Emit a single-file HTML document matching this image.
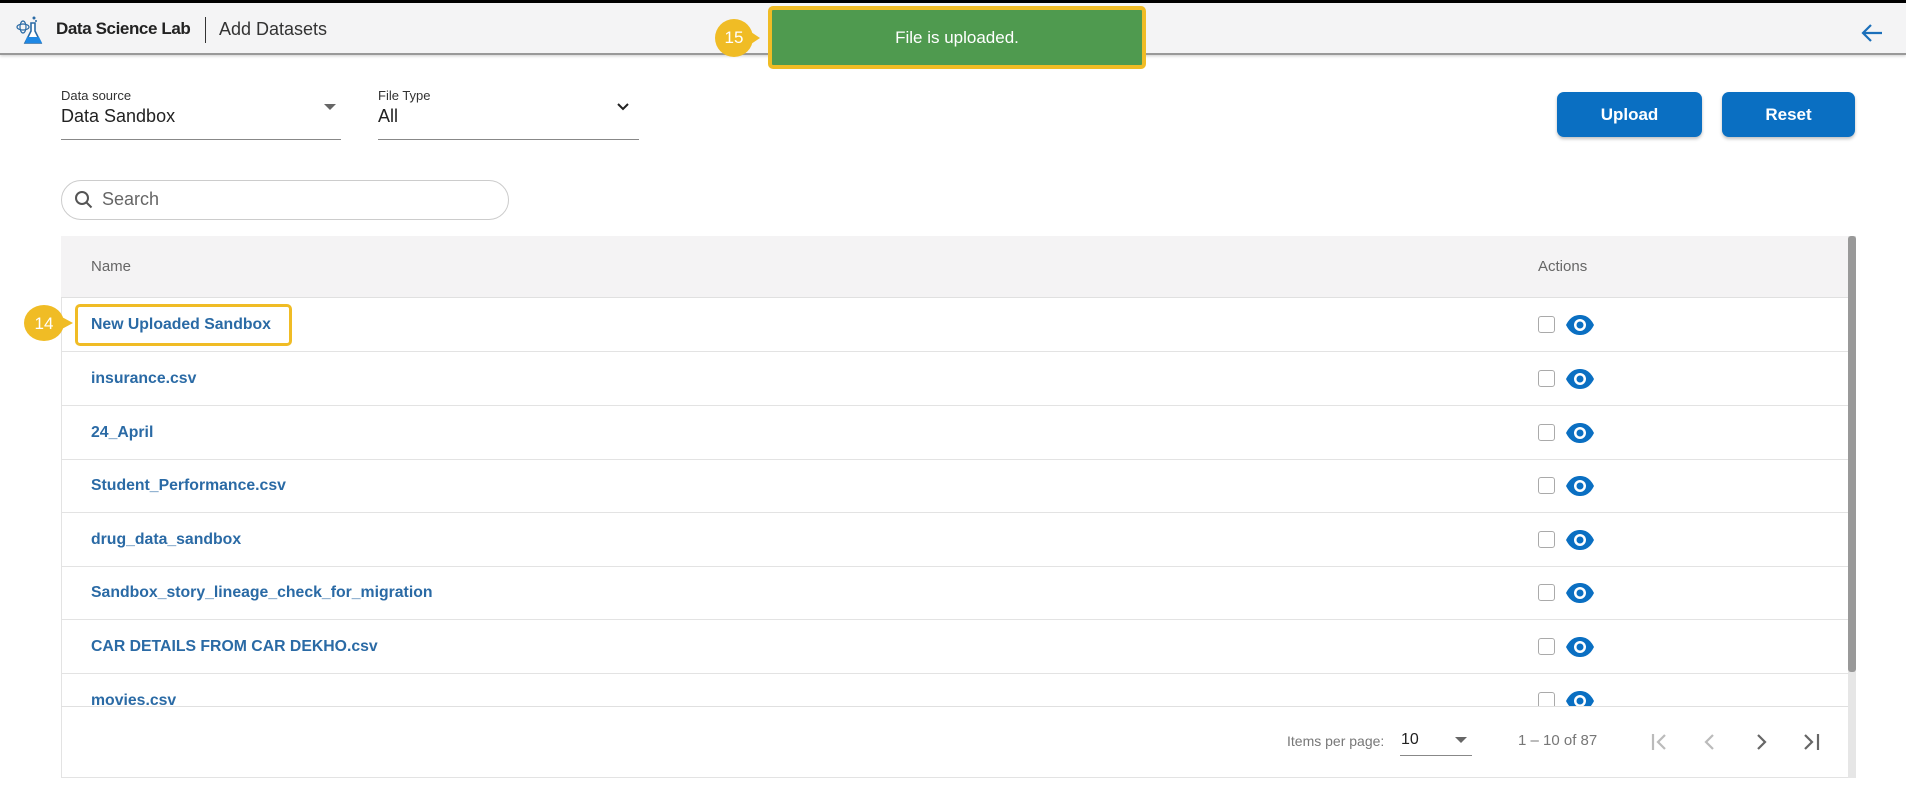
<!DOCTYPE html>
<html><head><meta charset="utf-8"><style>
*{box-sizing:border-box;margin:0;padding:0}
body{width:1906px;height:796px;background:#fff;font-family:"Liberation Sans",sans-serif;position:relative;overflow:hidden}
.abs{position:absolute}
.row{position:absolute;left:61px;width:1787px;height:54px;border-bottom:1px solid #e3e3e3}
.row .n{position:absolute;left:30px;top:18px;font-size:15.8px;font-weight:bold;color:#2a6aa5}
.row .cb{position:absolute;left:1477px;top:18px;width:17px;height:17px;border:1.5px solid #aaa;border-radius:3px;background:#fff}
.row svg{position:absolute;left:1504px;top:16px}
</style></head><body>
<div class="abs" style="left:0;top:0;width:1906px;height:3px;background:#000"></div>
<div class="abs" style="left:0;top:3px;width:1906px;height:52px;background:#f4f4f5;border-bottom:2px solid #999;box-shadow:0 1px 3px rgba(0,0,0,.2)"></div>
<svg class="abs" style="left:16px;top:15px" width="30" height="32" viewBox="0 0 30 32"><ellipse cx="7" cy="12" rx="6" ry="3" fill="none" stroke="#2a6aa5" stroke-width="1.2"/><ellipse cx="7" cy="12" rx="3" ry="6" fill="none" stroke="#2a6aa5" stroke-width="1.2"/><path d="M15 8v8l-6 12h16l-6-12V8z" fill="#fff" stroke="#2a6aa5" stroke-width="1.6"/><path d="M11 22h12l3 6H9z" fill="#1e88e5"/><circle cx="18" cy="3" r="1.5" fill="#2a6aa5"/><circle cx="20" cy="6" r="1" fill="#2a6aa5"/></svg>
<div class="abs" style="left:56px;top:19px;font-size:17px;letter-spacing:-0.4px;font-weight:bold;color:#222">Data Science Lab</div>
<div class="abs" style="left:205px;top:17px;width:1px;height:26px;background:#333"></div>
<div class="abs" style="left:219px;top:19px;font-size:18px;color:#333">Add Datasets</div>
<svg class="abs" style="left:1860px;top:22px" width="24" height="22" viewBox="0 0 24 22"><path d="M22 11H3M11 3l-8 8 8 8" fill="none" stroke="#1b6fba" stroke-width="2.2"/></svg>
<div class="abs" style="left:715px;top:19px;width:38px;height:38px;border-radius:50%;background:#f0bc25"></div>
<div class="abs" style="left:748px;top:30px;width:0;height:0;border-top:8px solid transparent;border-bottom:8px solid transparent;border-left:12px solid #f0bc25"></div>
<div class="abs" style="left:715px;top:28px;width:38px;text-align:center;color:#fff;font-size:17px">15</div>
<div class="abs" style="left:768px;top:6px;width:378px;height:63px;background:#4f9a4f;border:4px solid #f0bc25;border-radius:5px;color:#fff;font-size:17px;text-align:center;line-height:55px">File is uploaded.</div>
<div class="abs" style="left:61px;top:88px;font-size:13px;color:#333">Data source</div>
<div class="abs" style="left:61px;top:106px;font-size:18px;color:#222">Data Sandbox</div>
<div class="abs" style="left:324px;top:104px;border-left:6px solid transparent;border-right:6px solid transparent;border-top:6px solid #666"></div>
<div class="abs" style="left:61px;top:139px;width:280px;height:1px;background:#888"></div>
<div class="abs" style="left:378px;top:88px;font-size:13px;color:#333">File Type</div>
<div class="abs" style="left:378px;top:106px;font-size:18px;color:#222">All</div>
<svg class="abs" style="left:616px;top:102px" width="14" height="10"><path d="M2 2l5 5 5-5" fill="none" stroke="#222" stroke-width="2"/></svg>
<div class="abs" style="left:378px;top:139px;width:261px;height:1px;background:#888"></div>
<div class="abs" style="left:1557px;top:92px;width:145px;height:45px;background:#0a6fc2;border-radius:7px;color:#fff;font-weight:bold;font-size:17px;text-align:center;line-height:45px;box-shadow:0 2px 3px rgba(0,0,0,.25)">Upload</div>
<div class="abs" style="left:1722px;top:92px;width:133px;height:45px;background:#0a6fc2;border-radius:7px;color:#fff;font-weight:bold;font-size:17px;text-align:center;line-height:45px;box-shadow:0 2px 3px rgba(0,0,0,.25)">Reset</div>
<div class="abs" style="left:61px;top:180px;width:448px;height:40px;border:1px solid #ccc;border-radius:20px"></div>
<svg class="abs" style="left:74px;top:190px" width="20" height="20"><circle cx="8" cy="8" r="6" fill="none" stroke="#555" stroke-width="2"/><path d="M12.5 12.5l5 5" stroke="#555" stroke-width="2"/></svg>
<div class="abs" style="left:102px;top:189px;font-size:18px;color:#666">Search</div>
<div class="abs" style="left:61px;top:236px;width:1795px;height:542px;border:1px solid #e3e3e3;border-top:none"></div>
<div class="abs" style="left:61px;top:236px;width:1787px;height:62px;background:#f4f3f4;border-bottom:1px solid #e0e0e0"></div>
<div class="abs" style="left:91px;top:258px;font-size:15px;color:#666">Name</div>
<div class="abs" style="left:1538px;top:258px;font-size:15px;color:#666">Actions</div>
<div class="abs" style="left:1848px;top:236px;width:8px;height:542px;background:#e6e6e6"></div>
<div class="abs" style="left:1848px;top:236px;width:8px;height:436px;background:#999;border-radius:3px"></div>
<div class="abs" style="left:0;top:298px;width:1848px;height:408px;overflow:hidden">
<div class="row" style="top:0"><div class="n">New Uploaded Sandbox</div><div class="cb"></div><svg width="30" height="22" viewBox="0 0 30 22"><path d="M1 11C5 3 10 1 15 1s10 2 14 10c-4 8-9 10-14 10S5 19 1 11z" fill="#0a6fc2"/><circle cx="15" cy="11" r="6" fill="#fff"/><circle cx="15" cy="11" r="3.5" fill="#0a6fc2"/></svg></div>
<div class="row" style="top:54px"><div class="n">insurance.csv</div><div class="cb"></div><svg width="30" height="22" viewBox="0 0 30 22"><path d="M1 11C5 3 10 1 15 1s10 2 14 10c-4 8-9 10-14 10S5 19 1 11z" fill="#0a6fc2"/><circle cx="15" cy="11" r="6" fill="#fff"/><circle cx="15" cy="11" r="3.5" fill="#0a6fc2"/></svg></div>
<div class="row" style="top:108px"><div class="n">24_April</div><div class="cb"></div><svg width="30" height="22" viewBox="0 0 30 22"><path d="M1 11C5 3 10 1 15 1s10 2 14 10c-4 8-9 10-14 10S5 19 1 11z" fill="#0a6fc2"/><circle cx="15" cy="11" r="6" fill="#fff"/><circle cx="15" cy="11" r="3.5" fill="#0a6fc2"/></svg></div>
<div class="row" style="top:161px"><div class="n">Student_Performance.csv</div><div class="cb"></div><svg width="30" height="22" viewBox="0 0 30 22"><path d="M1 11C5 3 10 1 15 1s10 2 14 10c-4 8-9 10-14 10S5 19 1 11z" fill="#0a6fc2"/><circle cx="15" cy="11" r="6" fill="#fff"/><circle cx="15" cy="11" r="3.5" fill="#0a6fc2"/></svg></div>
<div class="row" style="top:215px"><div class="n">drug_data_sandbox</div><div class="cb"></div><svg width="30" height="22" viewBox="0 0 30 22"><path d="M1 11C5 3 10 1 15 1s10 2 14 10c-4 8-9 10-14 10S5 19 1 11z" fill="#0a6fc2"/><circle cx="15" cy="11" r="6" fill="#fff"/><circle cx="15" cy="11" r="3.5" fill="#0a6fc2"/></svg></div>
<div class="row" style="top:268px"><div class="n">Sandbox_story_lineage_check_for_migration</div><div class="cb"></div><svg width="30" height="22" viewBox="0 0 30 22"><path d="M1 11C5 3 10 1 15 1s10 2 14 10c-4 8-9 10-14 10S5 19 1 11z" fill="#0a6fc2"/><circle cx="15" cy="11" r="6" fill="#fff"/><circle cx="15" cy="11" r="3.5" fill="#0a6fc2"/></svg></div>
<div class="row" style="top:322px"><div class="n">CAR DETAILS FROM CAR DEKHO.csv</div><div class="cb"></div><svg width="30" height="22" viewBox="0 0 30 22"><path d="M1 11C5 3 10 1 15 1s10 2 14 10c-4 8-9 10-14 10S5 19 1 11z" fill="#0a6fc2"/><circle cx="15" cy="11" r="6" fill="#fff"/><circle cx="15" cy="11" r="3.5" fill="#0a6fc2"/></svg></div>
<div class="row" style="top:376px"><div class="n">movies.csv</div><div class="cb"></div><svg width="30" height="22" viewBox="0 0 30 22"><path d="M1 11C5 3 10 1 15 1s10 2 14 10c-4 8-9 10-14 10S5 19 1 11z" fill="#0a6fc2"/><circle cx="15" cy="11" r="6" fill="#fff"/><circle cx="15" cy="11" r="3.5" fill="#0a6fc2"/></svg></div>
</div>
<div class="abs" style="left:61px;top:706px;width:1787px;height:1px;background:#e0e0e0"></div>
<div class="abs" style="left:75px;top:304px;width:217px;height:42px;border:3.5px solid #f0bc25;border-radius:5px"></div>
<div class="abs" style="left:24px;top:305px;width:40px;height:36px;border-radius:50%;background:#f0bc25"></div>
<div class="abs" style="left:60px;top:316px;border-top:7px solid transparent;border-bottom:7px solid transparent;border-left:13px solid #f0bc25"></div>
<div class="abs" style="left:24px;top:314px;width:40px;text-align:center;color:#fff;font-size:17px">14</div>
<div class="abs" style="left:1287px;top:733px;font-size:14px;color:#777">Items per page:</div>
<div class="abs" style="left:1401px;top:731px;font-size:16px;color:#222">10</div>
<div class="abs" style="left:1455px;top:737px;border-left:6px solid transparent;border-right:6px solid transparent;border-top:6px solid #666"></div>
<div class="abs" style="left:1400px;top:755px;width:72px;height:1px;background:#888"></div>
<div class="abs" style="left:1518px;top:732px;font-size:15px;color:#777">1 – 10 of 87</div>
<svg class="abs" style="left:1650px;top:730px" width="180" height="24" viewBox="0 0 180 24"><path d="M3 4v16M15 5l-7 7 7 7" fill="none" stroke="#bbb" stroke-width="2.2"/><path d="M63 5l-7 7 7 7" fill="none" stroke="#bbb" stroke-width="2.2"/><path d="M108 5l7 7-7 7" fill="none" stroke="#666" stroke-width="2.2"/><path d="M155 5l7 7-7 7M168 4v16" fill="none" stroke="#666" stroke-width="2.2"/></svg>
</body></html>
